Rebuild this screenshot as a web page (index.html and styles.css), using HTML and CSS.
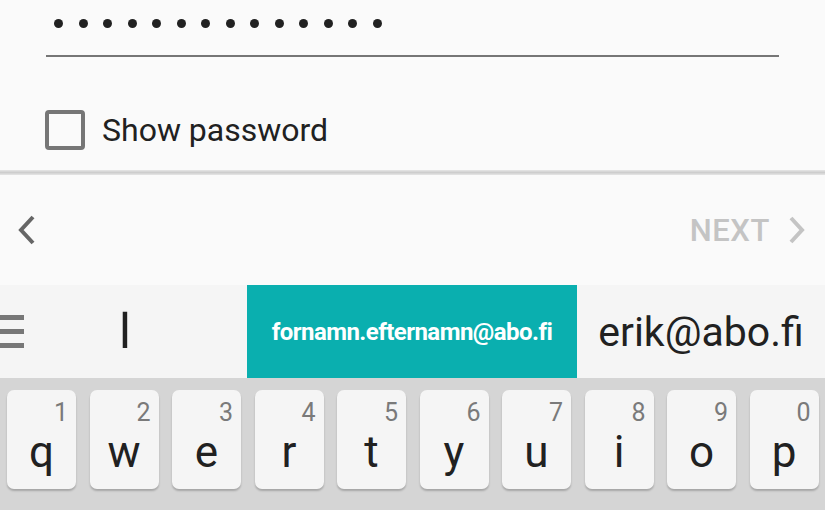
FILE: index.html
```html
<!DOCTYPE html>
<html lang="en">
<head>
	<meta charset="UTF-8">
	<title>Sign in</title>
	<link rel="stylesheet" href="styles.css">
</head>
<body>
	<div class="form">
		<div class="field">
			<span class="dot"></span><span class="dot"></span><span class="dot"></span><span class="dot"></span>
			<span class="dot"></span><span class="dot"></span><span class="dot"></span><span class="dot"></span>
			<span class="dot"></span><span class="dot"></span><span class="dot"></span><span class="dot"></span>
			<span class="dot"></span><span class="dot"></span>
		</div>
		<label class="check">
			<span class="box"></span>
			<span>Show password</span>
		</label>
	</div>
	<div class="divider"></div>
	<div class="nav">
		<svg class="chev" width="20" height="30" viewBox="0 0 20 30"><polyline points="16,2 4,15 16,28" fill="none" stroke="#666" stroke-width="4"/></svg>
		<div class="next">
			<span>NEXT</span>
			<svg class="chev" width="20" height="30" viewBox="0 0 20 30"><polyline points="4,3 15,15 4,27" fill="none" stroke="#c4c4c4" stroke-width="4"/></svg>
		</div>
	</div>
	<div class="suggest">
		<div class="menu"><i></i><i></i><i></i></div>
		<div class="slot first">l</div>
		<div class="slot picked">fornamn.efternamn@abo.fi</div>
		<div class="slot word">erik@abo.fi</div>
	</div>
	<div class="keyboard">
		<div class="row">
			<div class="key"><sup>1</sup><b>q</b></div>
			<div class="key"><sup>2</sup><b>w</b></div>
			<div class="key"><sup>3</sup><b>e</b></div>
			<div class="key"><sup>4</sup><b>r</b></div>
			<div class="key"><sup>5</sup><b>t</b></div>
			<div class="key"><sup>6</sup><b>y</b></div>
			<div class="key"><sup>7</sup><b>u</b></div>
			<div class="key"><sup>8</sup><b>i</b></div>
			<div class="key"><sup>9</sup><b>o</b></div>
			<div class="key"><sup>0</sup><b>p</b></div>
		</div>
	</div>
</body>
</html>
```
FILE: styles.css
```css
body{
	margin: 0;
	width: 825px;
	height: 510px;
	overflow: hidden;
	font-family: Roboto, "Noto Sans", sans-serif;
	color: #212121;
	background: #fafafa;
}
.form{
	height: 170px;
	background: #fafafa;
	padding: 0 46px;
	box-sizing: border-box;
}
.field{
	display: flex;
	align-items: center;
	gap: 15.5px;
	height: 46px;
	padding: 0 0 9px 8px;
	border-bottom: 2px solid #767676;
}
.dot{
	width: 9px;
	height: 9px;
	border-radius: 50%;
	background: #212121;
}
.check{
	display: flex;
	align-items: center;
	gap: 17px;
	margin-top: 53px;
	margin-left: -1px;
	font-size: 32px;
	height: 40px;
}
.box{
	width: 40px;
	height: 40px;
	box-sizing: border-box;
	border: 4px solid #767676;
	border-radius: 4px;
}
.divider{
	height: 5px;
	background: linear-gradient(#e6e6e6, #cdcdcd 50%, #e6e6e6);
}
.nav{
	height: 110px;
	display: flex;
	align-items: center;
	justify-content: space-between;
	padding: 0 18px 0 17px;
	background: #fafafa;
}
.chev{
	display: block;
}
.next{
	display: flex;
	align-items: center;
	gap: 17px;
	color: #c4c4c4;
	font-size: 31px;
	font-weight: 500;
	letter-spacing: 0.6px;
}
.suggest{
	height: 93px;
	display: grid;
	grid-template-columns: 22px 225px 330px 248px;
	background: #f5f5f5;
}
.menu{
	display: flex;
	flex-direction: column;
	justify-content: center;
	gap: 9px;
}
.menu i{
	display: block;
	height: 5px;
	width: 24px;
	background: #777;
}
.slot{
	display: flex;
	align-items: center;
	justify-content: center;
}
.first{
	font-size: 49px;
	padding-right: 19px;
}
.word{
	font-size: 41px;
}
.picked{
	background: #0aafaf;
	color: #fff;
	font-size: 24px;
	font-weight: 700;
	letter-spacing: -0.55px;
}
.keyboard{
	height: 132px;
	background: #d5d5d5;
	padding: 12px 0 0 7px;
	box-sizing: border-box;
}
.row{
	display: flex;
	gap: 13.5px;
}
.key{
	position: relative;
	width: 69px;
	height: 99px;
	border-radius: 7px;
	background: #f5f5f5;
	box-shadow: 0 2px 2px rgba(0,0,0,.22);
}
.key sup{
	position: absolute;
	top: 10px;
	right: 8px;
	font-size: 25px;
	color: #7a7a7a;
	line-height: 1;
}
.key b{
	position: absolute;
	left: 0;
	right: 0;
	top: 40px;
	text-align: center;
	font-weight: 400;
	font-size: 44px;
	line-height: 1;
}
```
